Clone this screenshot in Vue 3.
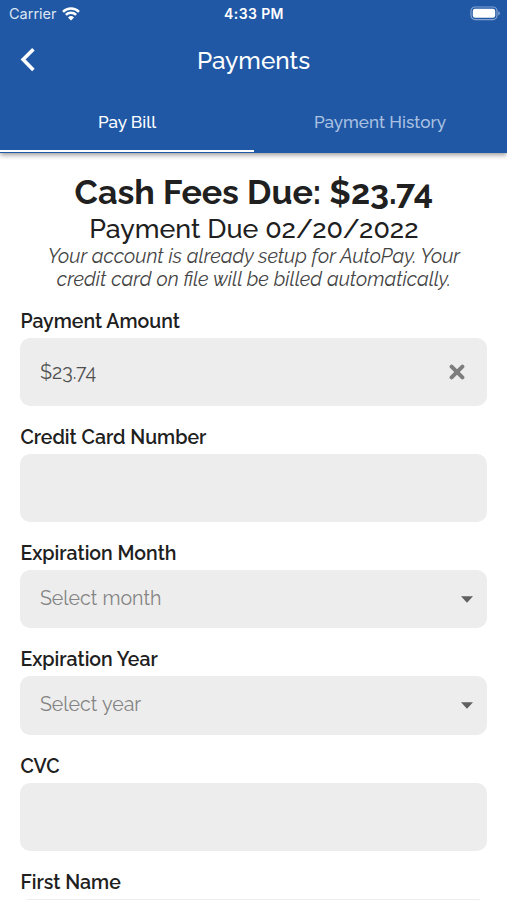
<script setup>
import { ref } from 'vue'

const tabs = ['Pay Bill', 'Payment History']
const activeTab = ref(0)

const fields = ref([
  { id: 'amount', label: 'Payment Amount', type: 'text', value: '$23.74', clearable: true },
  { id: 'card', label: 'Credit Card Number', type: 'text', value: '' },
  { id: 'month', label: 'Expiration Month', type: 'select', placeholder: 'Select month' },
  { id: 'year', label: 'Expiration Year', type: 'select', placeholder: 'Select year' },
  { id: 'cvc', label: 'CVC', type: 'text', value: '' },
  { id: 'first', label: 'First Name', type: 'text', value: '' }
])
</script>

<template>
  <div class="screen">
    <header class="header">
      <div class="status">
        <div class="carrier">
          <span>Carrier</span>
          <svg class="wifi" viewBox="0 0 18 14" width="18" height="14">
            <path d="M1 4.8a11.4 11.4 0 0 1 16 0" />
            <path d="M3.9 7.9a7.3 7.3 0 0 1 10.2 0" />
            <path class="dot" d="M9 13.4 6 10.4a4.3 4.3 0 0 1 6 0z" />
          </svg>
        </div>
        <span class="time">4:33 PM</span>
        <svg class="battery" viewBox="0 0 31 15" width="31" height="15">
          <rect class="shell" x="1" y="1" width="26" height="12.6" rx="4" />
          <rect x="2.8" y="2.8" width="22.4" height="9" rx="2.2" fill="#fff" />
          <path d="M28.3 5.2c2 .7 2 3.5 0 4.2z" fill="#fff" opacity=".5" />
        </svg>
      </div>

      <div class="nav">
        <button class="back" aria-label="Back">
          <svg viewBox="0 0 16 26" width="16" height="26">
            <path d="M13.4 2.2 3.1 12.6 13.4 23" />
          </svg>
        </button>
        <h1 class="title">Payments</h1>
      </div>

      <nav class="tabs">
        <button
          v-for="(tab, i) in tabs"
          :key="tab"
          class="tab"
          :class="{ active: activeTab === i }"
          @click="activeTab = i"
        >
          {{ tab }}
        </button>
      </nav>
    </header>

    <main class="content">
      <section class="due">
        <h2>Cash Fees Due: $23.74</h2>
        <p class="date">Payment Due 02/20/2022</p>
        <p class="note">
          Your account is already setup for AutoPay. Your<br>
          credit card on file will be billed automatically.
        </p>
      </section>

      <div v-for="field in fields" :key="field.id" class="field">
        <label>{{ field.label }}</label>
        <div v-if="field.type === 'text'" class="box">
          <span class="value">{{ field.value }}</span>
          <svg v-if="field.clearable" class="clear" viewBox="0 0 16 16" width="16" height="16" @click="field.value = ''">
            <path d="M2.6 2.6 13.4 13.4M13.4 2.6 2.6 13.4" />
          </svg>
        </div>
        <div v-else class="box select">
          <span class="placeholder">{{ field.placeholder }}</span>
          <svg viewBox="0 0 12 7" width="12" height="7">
            <path d="M0 .3h12L6 6.7z" fill="#606060" />
          </svg>
        </div>
      </div>
    </main>
  </div>
</template>

<style>
body {
  margin: 0;
  background: #fff;
}
</style>

<style scoped>
.screen {
  height: 900px;
  overflow: hidden;
  background: #fff;
  color: #202020;
  font-family: Raleway, Lato, sans-serif;
  font-variant-numeric: oldstyle-nums;
}

button {
  padding: 0;
  border: none;
  background: none;
  font: inherit;
  color: inherit;
}

.header {
  height: 152.5px;
  background: #2058a6;
  color: #fff;
  box-shadow: 0 2px 5px rgba(0, 0, 0, 0.4);
}

.status {
  display: grid;
  grid-template-columns: 1fr auto 1fr;
  align-items: center;
  height: 27px;
  padding: 0 6px 0 9px;
  font-family: Inter, sans-serif;
  font-size: 14.5px;
  font-variant-numeric: normal;
}

.carrier {
  display: flex;
  align-items: center;
  gap: 5px;
  color: #dce6f3;
}

.wifi {
  fill: none;
  stroke: #fff;
  stroke-width: 2.5;
}

.wifi .dot {
  fill: #fff;
  stroke: none;
}

.time {
  margin-right: 2px;
  font-size: 14px;
  font-weight: 600;
  letter-spacing: 0.4px;
}

.battery {
  justify-self: end;
}

.shell {
  fill: none;
  stroke: #fff;
  stroke-opacity: 0.45;
  stroke-width: 1.2;
}

.nav {
  display: grid;
  grid-template-columns: 60px 1fr 60px;
  align-items: center;
  height: 66px;
}

.back {
  display: flex;
  padding-left: 20px;
}

.back path {
  fill: none;
  stroke: #fff;
  stroke-width: 3.6;
}

.title {
  margin: 0;
  font-size: 24.4px;
  font-weight: 500;
  text-align: center;
}

.tabs {
  display: grid;
  grid-template-columns: 254px 252px;
  height: 59px;
}

.tab {
  border-bottom: 2.5px solid transparent;
  font-size: 17.15px;
  font-weight: 500;
  color: #a9c1e1;
}

.tab.active {
  border-color: #fff;
  color: #fff;
}

.content {
  padding: 19.5px 19.6px 0 20.4px;
}

.due {
  text-align: center;
}

h2 {
  margin: 0;
  font-size: 34px;
  line-height: 40px;
  font-weight: 700;
}

.date {
  margin: 0;
  font-size: 26.8px;
  line-height: 33px;
  font-weight: 500;
}

.note {
  margin: 0 0 19px;
  font-size: 19.65px;
  line-height: 23px;
  font-style: italic;
  color: #444;
  white-space: nowrap;
}

.field {
  margin-bottom: 20px;
}

label {
  display: block;
  margin-bottom: 4px;
  font-size: 19.5px;
  line-height: 24px;
  font-weight: 600;
}

.box {
  display: flex;
  align-items: center;
  justify-content: space-between;
  height: 68px;
  padding: 0 22px 0 19.5px;
  border-radius: 10px;
  background: #ededed;
  font-size: 19.6px;
  color: #505050;
}

.value {
  padding-top: 1px;
}

.select {
  height: 58.3px;
  padding-right: 14px;
  box-sizing: border-box;
}

.placeholder {
  padding-bottom: 1px;
  color: #848484;
}

.clear path {
  fill: none;
  stroke: #7d7d7d;
  stroke-width: 4;
  stroke-linecap: round;
}
</style>
